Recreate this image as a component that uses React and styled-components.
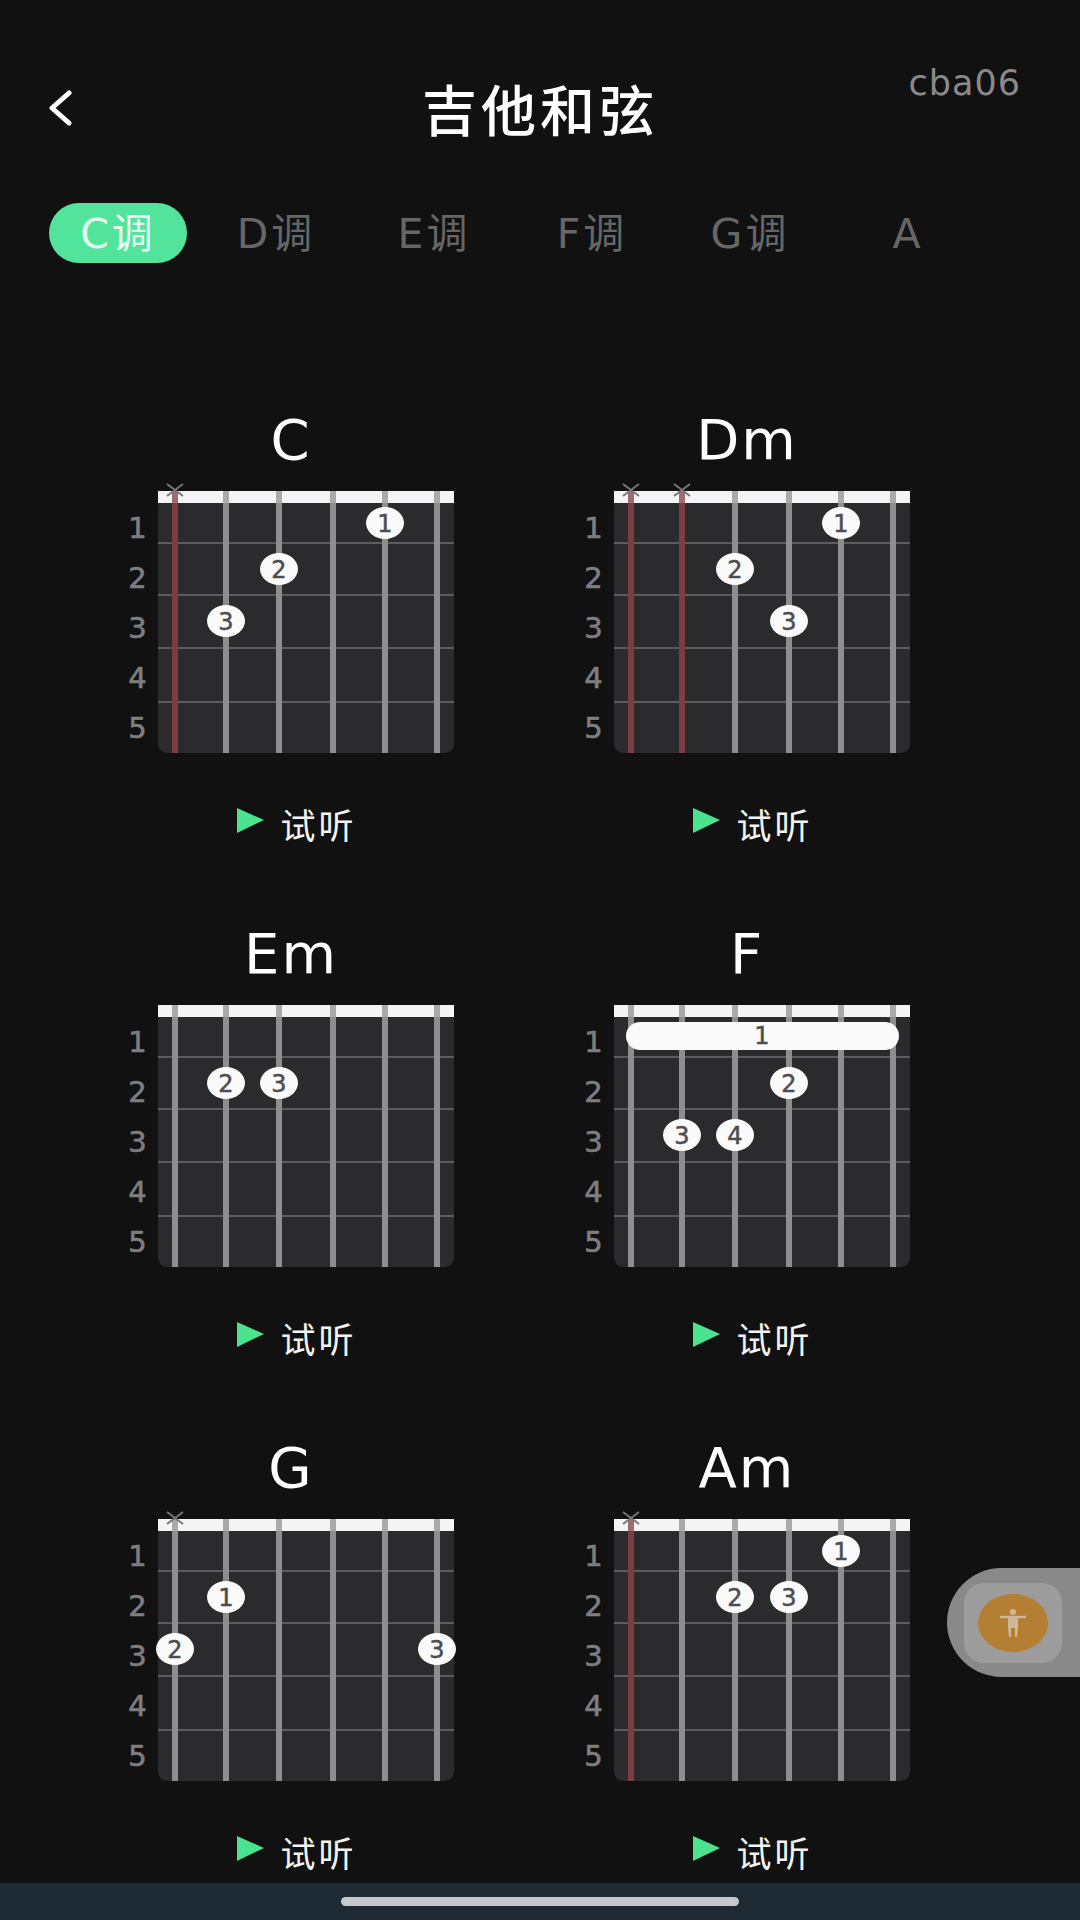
import React from "react";
import styled, { createGlobalStyle } from "styled-components";

const STRINGS = [17, 68, 121, 175, 227, 279];
const FRETS = [51, 103, 156, 210];
const ROWS = { 1: 32, 2: 78, 3: 130 };

const TABS = ["C调", "D调", "E调", "F调", "G调", "A"];

const CHORDS = [
  { name: "C", muted: [0], red: [0], dots: [[4, 1, 1], [2, 2, 2], [1, 3, 3]] },
  { name: "Dm", muted: [0, 1], red: [0, 1], dots: [[4, 1, 1], [2, 2, 2], [3, 3, 3]] },
  { name: "Em", muted: [], red: [], dots: [[1, 2, 2], [2, 2, 3]] },
  { name: "F", muted: [], red: [], barre: true, dots: [[3, 2, 2], [1, 3, 3], [2, 3, 4]] },
  { name: "G", muted: [0], red: [], dots: [[1, 2, 1], [0, 3, 2], [5, 3, 3]] },
  { name: "Am", muted: [0], red: [0], dots: [[4, 1, 1], [2, 2, 2], [3, 2, 3]] },
];

export default function App() {
  return (
    <Page>
      <GlobalStyle />
      <Header>
        <BackButton>
          <svg width="26" height="36" viewBox="0 0 26 36" fill="none">
            <path d="M22 3 L5 18 L22 33" stroke="#fff" strokeWidth="5" strokeLinecap="round" strokeLinejoin="round" />
          </svg>
        </BackButton>
        <Title>吉他和弦</Title>
        <UserCode>cba06</UserCode>
      </Header>
      <TabBar>
        {TABS.map((tab, idx) => (
          <Tab key={tab} $active={idx === 0}>{tab}</Tab>
        ))}
      </TabBar>
      <ChordGrid>
        {CHORDS.map(chord => <ChordCard key={chord.name} chord={chord} />)}
      </ChordGrid>
      <NavBar>
        <NavHandle />
      </NavBar>
      <FloatTab>
        <FloatInner>
          <FloatCircle>
            <svg width="28" height="32" viewBox="0 0 28 32" fill="none">
              <circle cx="14" cy="5" r="3" fill="#cdb89a" />
              <path d="M1 10 H27" stroke="#cdb89a" strokeWidth="2.4" />
              <path d="M9 10 H19 V20 L18 30 H16 V21 H12 V30 H10 L9 20 Z" fill="#cdb89a" />
            </svg>
          </FloatCircle>
        </FloatInner>
      </FloatTab>
    </Page>
  );
}

const ChordCard = ({ chord }) => (
  <Card>
    <ChordName>{chord.name}</ChordName>
    <BoardRow>
      <FretNumbers>
        {[1, 2, 3, 4, 5].map(n => <FretNumber key={n}>{n}</FretNumber>)}
      </FretNumbers>
      <Fretboard chord={chord} />
    </BoardRow>
    <ListenRow>
      <svg width="28" height="27" viewBox="0 0 28 27">
        <path d="M1 1 L28 13 L1 26 Z" fill="#4be38f" />
      </svg>
      <ListenText>试听</ListenText>
    </ListenRow>
  </Card>
);

const Fretboard = ({ chord }) => (
  <BoardSvg width="296" height="262" viewBox="0 0 296 262">
    <rect x="0" y="6" width="296" height="256" rx="9" fill="#2b2b2d" />
    <rect x="0" y="0" width="296" height="12" fill="#f1f1f1" />
    {FRETS.map(y => (
      <rect key={y} x="0" y={y} width="296" height="2" fill="#5c5c5e" />
    ))}
    {STRINGS.map((x, idx) => (
      <rect
        key={x}
        x={x - 3}
        y="0"
        width="6"
        height="262"
        fill={chord.red.includes(idx) ? "#7d3c40" : "#8e8e8e"}
      />
    ))}
    <rect x="0" y="0" width="296" height="12" fill="#fff" opacity="0.25" />
    {chord.muted.map(idx => (
      <path
        key={idx}
        d={`M${STRINGS[idx] - 8} -7 L${STRINGS[idx] + 8} 5 M${STRINGS[idx] + 8} -7 L${STRINGS[idx] - 8} 5`}
        stroke="#77777a"
        strokeWidth="2"
      />
    ))}
    {chord.barre && (
      <>
        <rect x="12" y="17" width="273" height="28" rx="14" fill="#fafafa" />
        <DotLabel x="148" y="39">1</DotLabel>
      </>
    )}
    {chord.dots.map(([string, row, finger]) => (
      <g key={finger}>
        <ellipse cx={STRINGS[string]} cy={ROWS[row]} rx="19" ry="16" fill="#fafafa" />
        <DotLabel x={STRINGS[string]} y={ROWS[row] + 9}>{finger}</DotLabel>
      </g>
    ))}
  </BoardSvg>
);

const GlobalStyle = createGlobalStyle`
  html, body {
    margin: 0;
    padding: 0;
    background: #111112;
  }
`;

const Page = styled.div`
  position: relative;
  width: 1080px;
  height: 1920px;
  overflow: hidden;
  display: flex;
  flex-direction: column;
  background: #111112;
  color: #fff;
  font-family: "DejaVu Sans", "Noto Sans CJK SC", sans-serif;
`;

const Header = styled.div`
  display: grid;
  grid-template-columns: 1fr auto 1fr;
  align-items: center;
  height: 130px;
  padding: 42px 47px 0 47px;
`;

const BackButton = styled.div`
  display: flex;
  align-items: center;
  height: 36px;
  margin-top: 2px;
`;

const Title = styled.div`
  font-family: "Noto Sans CJK SC", sans-serif;
  font-size: 55px;
  font-weight: 500;
  letter-spacing: 4px;
  line-height: 60px;
`;

const UserCode = styled.div`
  justify-self: end;
  margin: -48px 12px 0 0;
  font-size: 35px;
  letter-spacing: 1px;
  color: #8a8a8a;
`;

const TabBar = styled.div`
  display: grid;
  grid-template-columns: repeat(6, 158px);
  padding: 31px 0 0 39px;
`;

const Tab = styled.div`
  justify-self: center;
  width: 138px;
  height: 60px;
  line-height: 63px;
  text-align: center;
  border-radius: 30px;
  font-size: 41px;
  letter-spacing: 3px;
  color: ${props => (props.$active ? "#e6fbef" : "#666667")};
  background: ${props => (props.$active ? "#52e49c" : "transparent")};
`;

const ChordGrid = styled.div`
  display: grid;
  grid-template-columns: 330px 330px;
  column-gap: 126px;
  row-gap: 74px;
  padding: 142px 0 0 124px;
`;

const Card = styled.div`
  display: flex;
  flex-direction: column;
`;

const ChordName = styled.div`
  height: 70px;
  margin-bottom: 16px;
  padding-left: 4px;
  line-height: 70px;
  text-align: center;
  font-size: 56px;
  letter-spacing: 2px;
  color: #fff;
`;

const BoardRow = styled.div`
  display: flex;
  align-items: flex-start;
`;

const FretNumbers = styled.div`
  width: 28px;
  margin-right: 7px;
  padding-top: 12px;
`;

const FretNumber = styled.div`
  height: 50px;
  line-height: 50px;
  text-align: center;
  font-size: 29px;
  color: #7e7e7f;
  -webkit-text-stroke: 0.6px #7e7e7f;
`;

const BoardSvg = styled.svg`
  display: block;
  overflow: visible;
`;

const DotLabel = styled.text`
  font-family: "DejaVu Sans", sans-serif;
  font-size: 24px;
  fill: #4d4d4f;
  stroke: #4d4d4f;
  stroke-width: 0.5px;
  text-anchor: middle;
`;

const ListenRow = styled.div`
  display: flex;
  justify-content: center;
  align-items: center;
  gap: 16px;
  height: 40px;
  margin-top: 52px;
  padding-left: 15px;

  > svg {
    margin-top: -8px;
    position: relative;
    top: -1px;
  }
`;

const ListenText = styled.span`
  position: relative;
  top: -2px;
  font-family: "Noto Sans CJK SC", sans-serif;
  font-size: 35px;
  letter-spacing: 3px;
  color: #f4f4f4;
`;

const NavBar = styled.div`
  position: absolute;
  left: 0;
  right: 0;
  bottom: 0;
  height: 37px;
  display: flex;
  justify-content: center;
  align-items: center;
  background: #1e2a34;
`;

const NavHandle = styled.div`
  width: 398px;
  height: 9px;
  border-radius: 5px;
  background: #c6c9cc;
`;

const FloatTab = styled.div`
  position: absolute;
  right: 0;
  top: 1568px;
  width: 133px;
  height: 109px;
  display: flex;
  align-items: center;
  padding-left: 17px;
  box-sizing: border-box;
  border-radius: 55px 0 0 55px;
  background: #898989;
`;

const FloatInner = styled.div`
  width: 98px;
  height: 80px;
  display: flex;
  justify-content: center;
  align-items: center;
  border-radius: 20px;
  background: #9c9c9c;
`;

const FloatCircle = styled.div`
  width: 70px;
  height: 58px;
  display: flex;
  justify-content: center;
  align-items: center;
  border-radius: 50%;
  background: #b47f33;
`;
